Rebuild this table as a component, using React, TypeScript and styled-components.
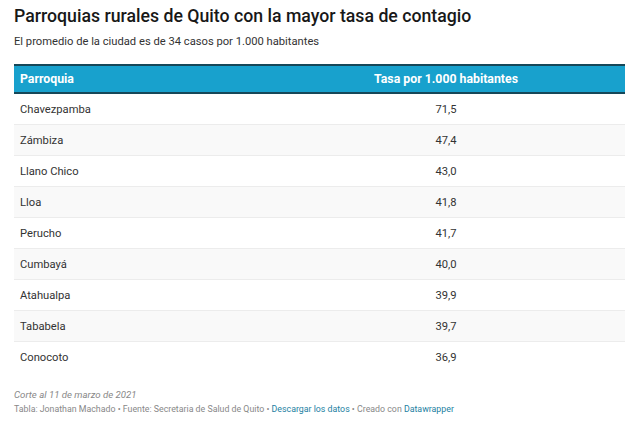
import React from "react";
import styled, { createGlobalStyle } from "styled-components";

const Global = createGlobalStyle`
  html, body { margin: 0; padding: 0; background: #fff; }
  body { font-family: Roboto, "Liberation Sans", Arial, sans-serif; }
`;

const Page = styled.div`
  padding: 5px 18px 0 14px;
  width: 643px;
  box-sizing: border-box;
`;

const Title = styled.h1`
  margin: 0;
  font-size: 17.7px;
  font-weight: 500;
  color: #181818;
  line-height: 22px;
`;

const Subtitle = styled.p`
  margin: 7px 0 0;
  font-size: 11.2px;
  color: #333;
  line-height: 15px;
`;

const Table = styled.div`
  margin-top: 15px;
  width: 611px;
`;

const HeaderRow = styled.div`
  display: grid;
  grid-template-columns: 253px 1fr;
  height: 26px;
  align-items: center;
  background: #18a1cd;
  border-top: 2px solid #164758;
  border-bottom: 2px solid #164758;
  color: #fff;
  font-weight: 700;
  font-size: 12.3px;
`;

const Cell = styled.div<{ $center?: boolean }>`
  padding: 0 6px;
  text-align: ${(p) => (p.$center ? "center" : "left")};
`;

const Row = styled.div<{ $alt: boolean; $last: boolean }>`
  display: grid;
  grid-template-columns: 253px 1fr;
  height: 30px;
  align-items: center;
  background: ${(p) => (p.$alt ? "#f9f9f9" : "#fff")};
  border-bottom: 1px solid ${(p) => (p.$last ? "transparent" : "#ececec")};
  font-size: 11.2px;
  color: #333;
`;

const Notes = styled.div`
  margin-top: 14px;
  color: #888;
  line-height: 15px;
`;

const Note = styled.div`
  font-style: italic;
  font-size: 9.65px;
`;

const Source = styled.div`
  font-size: 8.8px;
`;

const Link = styled.span`
  color: #1d81a2;
`;

const data: [string, string][] = [
  ["Chavezpamba", "71,5"],
  ["Zámbiza", "47,4"],
  ["Llano Chico", "43,0"],
  ["Lloa", "41,8"],
  ["Perucho", "41,7"],
  ["Cumbayá", "40,0"],
  ["Atahualpa", "39,9"],
  ["Tababela", "39,7"],
  ["Conocoto", "36,9"],
];

export default function App() {
  return (
    <>
      <Global />
      <Page>
        <Title>Parroquias rurales de Quito con la mayor tasa de contagio</Title>
        <Subtitle>El promedio de la ciudad es de 34 casos por 1.000 habitantes</Subtitle>
        <Table>
          <HeaderRow>
            <Cell>Parroquia</Cell>
            <Cell $center>Tasa por 1.000 habitantes</Cell>
          </HeaderRow>
          {data.map(([n, v], i) => (
            <Row key={n} $alt={i % 2 === 1} $last={i === data.length - 1}>
              <Cell>{n}</Cell>
              <Cell $center>{v}</Cell>
            </Row>
          ))}
        </Table>
        <Notes>
          <Note>Corte al 11 de marzo de 2021</Note>
          <Source>
            Tabla: Jonathan Machado • Fuente: Secretaria de Salud de Quito •{" "}
            <Link>Descargar los datos</Link> • Creado con <Link>Datawrapper</Link>
          </Source>
        </Notes>
      </Page>
    </>
  );
}
